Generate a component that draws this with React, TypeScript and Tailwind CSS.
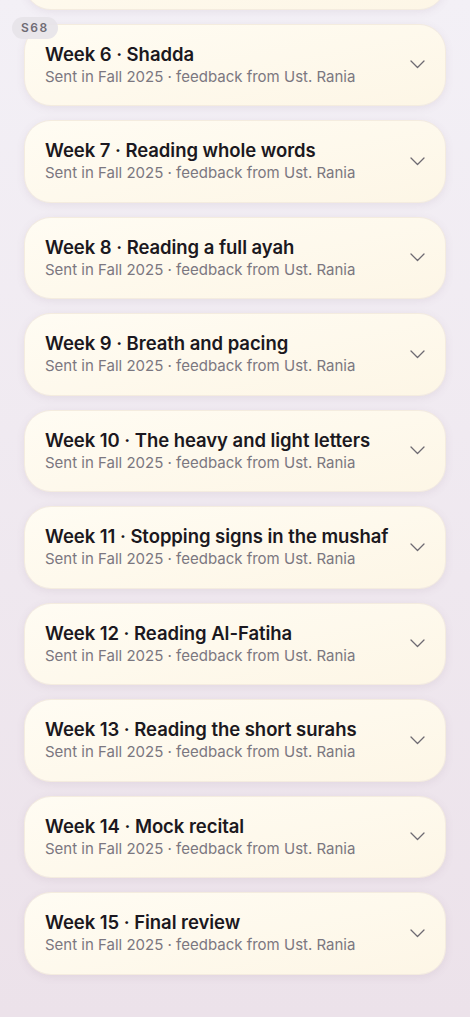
import React from "react";

const weeks = [
  "Week 6 · Shadda",
  "Week 7 · Reading whole words",
  "Week 8 · Reading a full ayah",
  "Week 9 · Breath and pacing",
  "Week 10 · The heavy and light letters",
  "Week 11 · Stopping signs in the mushaf",
  "Week 12 · Reading Al-Fatiha",
  "Week 13 · Reading the short surahs",
  "Week 14 · Mock recital",
  "Week 15 · Final review",
];

function Chevron() {
  return (
    <svg width="15" height="9" viewBox="0 0 15 9" fill="none" className="shrink-0">
      <path d="M1 1 L7.5 7.5 L14 1" stroke="#6e6a72" strokeWidth="1.3" strokeLinecap="round" strokeLinejoin="round" />
    </svg>
  );
}

const cardCls =
  "h-[80.5px] rounded-[26px] bg-gradient-to-br from-[#fffcf3] to-[#fdf6e6] shadow-[0_2px_10px_rgba(120,90,120,0.12)] ring-1 ring-[#f4ecdf] flex items-center pl-5 pr-[20px]";

function Card({ title }: { title: string }) {
  return (
    <div className={cardCls}>
      <div className="flex-1 min-w-0 flex flex-col">
        <div className="text-[18.5px] leading-[23px] font-semibold text-[#1b1820] tracking-[-0.05px] whitespace-nowrap">{title}</div>
        <div className="text-[15px] leading-[20px] text-[#7b7780] mt-[1px] whitespace-nowrap">Sent in Fall 2025 · feedback from Ust. Rania</div>
      </div>
      <Chevron />
    </div>
  );
}

export default function App() {
  return (
    <div
      className="relative w-[470px] h-[1017px] overflow-hidden bg-gradient-to-b from-[#f3f0f6] to-[#ece2ea]"
      style={{ fontFamily: "Inter, 'Noto Sans', sans-serif" }}
    >
      <div className="px-[25px] -mt-[72px] flex flex-col gap-4">
        <div className={cardCls} />
        {weeks.map((w) => (
          <Card key={w} title={w} />
        ))}
      </div>
      <div className="absolute left-[12px] top-[17px] h-[22px] px-[9px] rounded-full bg-[#e7e3e9]/90 flex items-center text-[12px] font-semibold tracking-[1.5px] text-[#6f6b73]">
        S68
      </div>
    </div>
  );
}
